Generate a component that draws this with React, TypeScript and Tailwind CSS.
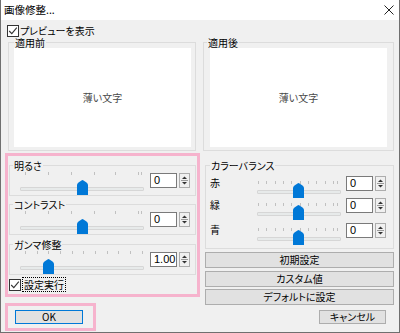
import React from 'react';

const FONT = "font-['Noto_Sans_CJK_JP','Noto_Sans',sans-serif] [font-feature-settings:'palt']";

function CheckBox({ label, focus }: { label: string; focus?: boolean }) {
  return (
    <div className="flex items-center h-[13px]">
      <div className="w-[12px] h-[12px] border border-[#333333] bg-white flex items-center justify-center">
        <svg width="10" height="10" viewBox="0 0 10 10">
          <path d="M1.2 5 L3.8 7.6 L8.8 1.6" fill="none" stroke="#333333" strokeWidth="1.1" />
        </svg>
      </div>
      <span
        className={`ml-[1px] text-[10px] leading-[11px] text-black ${
          focus ? 'border border-dotted border-black px-[1px] py-[1px]' : ''
        }`}
      >
        {label}
      </span>
    </div>
  );
}

function GroupBox({
  label,
  className,
  labelClass,
  children,
}: {
  label: string;
  className: string;
  labelClass: string;
  children?: React.ReactNode;
}) {
  return (
    <div className={`border border-[#dcdcdc] ${className}`}>
      <div
        className={`-mt-[6px] w-fit px-[1px] bg-[#f0f0f0] text-[10px] leading-[11px] h-[11px] text-black ${labelClass}`}
      >
        {label}
      </div>
      {children}
    </div>
  );
}

function SpinBox({ value }: { value: string }) {
  return (
    <div className="flex">
      <div className="w-[27px] h-[15px] border border-[#7a7a7a] bg-white text-[11px] leading-[13px] pl-[3px] text-black font-['Liberation_Sans',sans-serif]">
        {value}
      </div>
      <div className="ml-[2px] w-[11px] h-[15px] border border-[#adadad] bg-[#f0f0f0]">
        <svg width="9" height="13" viewBox="0 0 9 13">
          <path d="M2 5 L4.5 2.5 L7 5 Z" fill="#333333" />
          <line x1="1" y1="6.5" x2="8" y2="6.5" stroke="#9a9a9a" strokeWidth="1" />
          <path d="M2 8 L7 8 L4.5 10.5 Z" fill="#333333" />
        </svg>
      </div>
    </div>
  );
}

function Slider({
  className,
  ticks,
  pos,
  tickClass,
}: {
  className: string;
  ticks: number[];
  pos: number;
  tickClass: string;
}) {
  return (
    <div className={`relative h-[22px] ${className}`}>
      {ticks.map((t) => (
        <div
          key={t}
          className={`absolute w-px h-[3px] bg-[#c0c0c0] ${tickClass}`}
          style={{ left: t }}
        />
      ))}
      <div className="absolute left-0 right-0 top-[16px] h-[4px] bg-[#e7eaea] border border-[#d6d6d6] rounded-[1px]" />
      <svg
        className="absolute top-[9px]"
        style={{ left: pos - 5 }}
        width="11"
        height="15"
        viewBox="0 0 11 15"
      >
        <path
          d="M0 5 Q0 3.5 1.5 2.5 L4.5 0.4 Q5.5 -0.2 6.5 0.4 L9.5 2.5 Q11 3.5 11 5 V15 H0 Z"
          fill="#0078d7"
        />
      </svg>
    </div>
  );
}

const leftTicks = [5, 28, 51, 74, 95, 118, 121];
const gammaTicks = [5, 17, 28, 40, 52, 63, 75, 87, 98, 110, 122];
const colorTicks = [1, 9, 18, 26, 34, 43, 51, 59, 68, 76, 80];

function LeftRow({ ticks, pos, value }: { ticks: number[]; pos: number; value: string }) {
  return (
    <div className="flex items-start">
      <Slider className="ml-[10px] w-[124px]" ticks={ticks} pos={pos} tickClass="top-[1px]" />
      <div className="ml-[6px] mt-[2px]">
        <SpinBox value={value} />
      </div>
    </div>
  );
}

function ColorRow({ label, className }: { label: string; className: string }) {
  return (
    <div className={`flex items-start ${className}`}>
      <div className="ml-[4px] w-[47px] mt-[2px] text-[10px] leading-[14px] text-black">{label}</div>
      <Slider className="w-[84px]" ticks={colorTicks} pos={41} tickClass="top-[7px]" />
      <div className="ml-[5px] mt-[2px]">
        <SpinBox value="0" />
      </div>
    </div>
  );
}

function Button({ label, className }: { label: string; className: string }) {
  return (
    <div
      className={`flex items-center justify-center bg-[#e1e1e1] border text-[10px] leading-none text-black ${className}`}
    >
      {label}
    </div>
  );
}

function Preview({ className }: { className: string }) {
  return (
    <div className={`h-[99px] bg-white flex items-center justify-center ${className}`}>
      <span className="text-[10px] leading-none text-[#4a4a4a]">薄い文字</span>
    </div>
  );
}

export default function App() {
  return (
    <div
      className={`w-[400px] h-[333px] bg-[#f0f0f0] border-x border-b border-[#6f6f6f] flex flex-col overflow-hidden ${FONT}`}
    >
      {/* title bar */}
      <div className="h-[20px] bg-white flex items-center justify-between pl-[3px] pr-[5px]">
        <span className="text-[10.5px] leading-none text-black">画像修整...</span>
        <svg width="10" height="10" viewBox="0 0 10 10">
          <path d="M0.5 0.5 L9.5 9.5 M9.5 0.5 L0.5 9.5" stroke="#222222" strokeWidth="1" />
        </svg>
      </div>

      <div className="flex h-[312px]">
        {/* left column */}
        <div className="w-[199px] flex flex-col">
          <div className="mt-[4px] ml-[6px]">
            <CheckBox label="プレビューを表示" />
          </div>
          <GroupBox label="適用前" className="mt-[5px] ml-[7px] w-[188px] h-[109px]" labelClass="ml-[5px]">
            <Preview className="ml-[5px] w-[177px]" />
          </GroupBox>

          <div className="mt-[2px] ml-[4px] w-[195px] h-[144px] border-[3px] border-[#f6b3cd] flex flex-col">
            <GroupBox label="明るさ" className="mt-[9px] ml-[1px] w-[187px] h-[31px]" labelClass="ml-[3px]">
              <LeftRow ticks={leftTicks} pos={62} value="0" />
            </GroupBox>
            <GroupBox label="コントラスト" className="mt-[8px] ml-[1px] w-[187px] h-[31px]" labelClass="ml-[3px]">
              <LeftRow ticks={leftTicks} pos={62} value="0" />
            </GroupBox>
            <GroupBox label="ガンマ修整" className="mt-[9px] ml-[1px] w-[187px] h-[31px]" labelClass="ml-[3px]">
              <LeftRow ticks={gammaTicks} pos={28} value="1.00" />
            </GroupBox>
            <div className="mt-[3px] ml-[1px]">
              <CheckBox label="設定実行" focus />
            </div>
          </div>

          <div className="mt-[6px] ml-[4px] w-[91px] h-[28px] border-[3px] border-[#f6b3cd]">
            <Button label="OK" className="ml-[7px] mt-[4px] w-[68px] h-[14px] border-[#0078d7]" />
          </div>
        </div>

        {/* right column */}
        <div className="flex-1 flex flex-col">
          <GroupBox label="適用後" className="mt-[22px] ml-[3px] w-[191px] h-[109px]" labelClass="ml-[3px]">
            <Preview className="ml-[6px] w-[177px]" />
          </GroupBox>

          <GroupBox label="カラーバランス" className="mt-[14px] ml-[5px] w-[189px] h-[84px]" labelClass="ml-[4px]">
            <ColorRow label="赤" className="mt-[3px] h-[22px]" />
            <ColorRow label="緑" className="h-[25px]" />
            <ColorRow label="青" className="h-[22px]" />
          </GroupBox>

          <Button label="初期設定" className="mt-[3px] ml-[5px] w-[189px] h-[16px] border-[#adadad]" />
          <Button label="カスタム値" className="mt-[3px] ml-[5px] w-[189px] h-[16px] border-[#adadad]" />
          <Button label="デフォルトに設定" className="mt-[2px] ml-[5px] w-[189px] h-[16px] border-[#adadad]" />
          <Button label="キャンセル" className="mt-[5px] ml-[119px] w-[67px] h-[14px] border-[#adadad]" />
        </div>
      </div>
    </div>
  );
}
